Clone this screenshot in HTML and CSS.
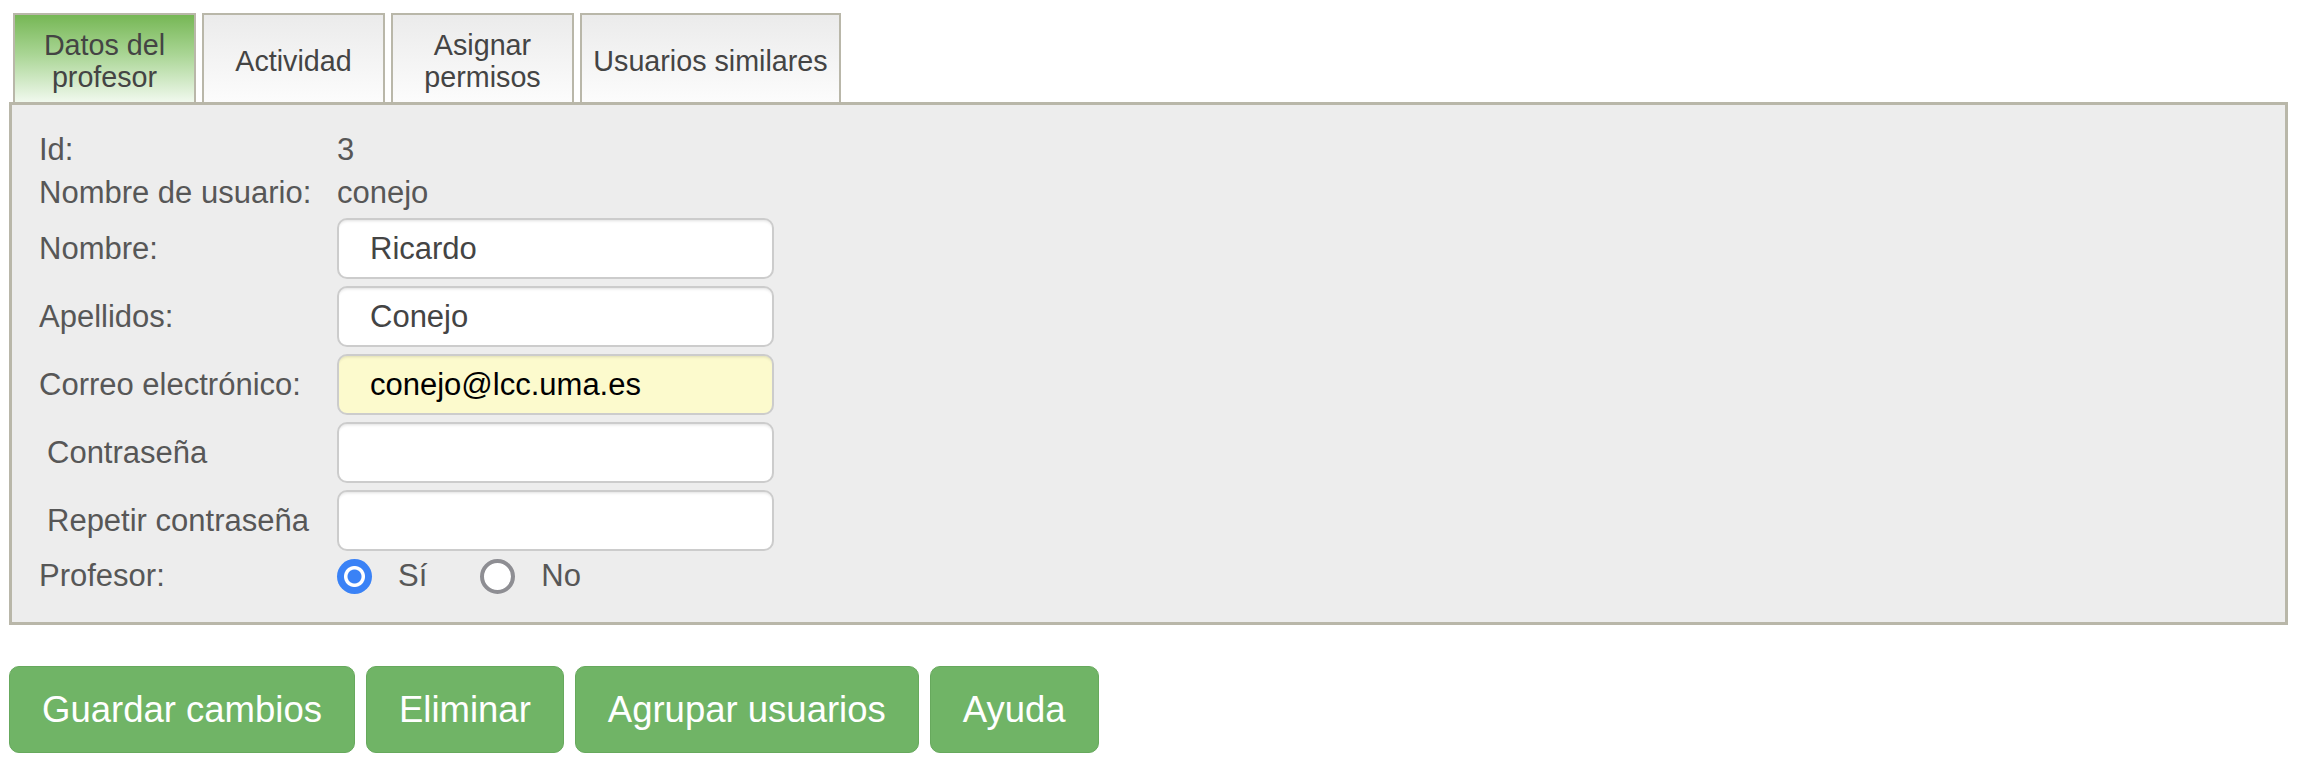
FILE: index.html
```html
<!DOCTYPE html>
<html lang="es">
<head>
<meta charset="utf-8">
<title>Datos del profesor</title>
<link rel="stylesheet" href="styles.css">
</head>
<body>
<div class="page">
  <ul class="tabs">
    <li class="tab tab-fixed active">Datos del profesor</li>
    <li class="tab tab-fixed">Actividad</li>
    <li class="tab tab-fixed">Asignar permisos</li>
    <li class="tab tab-auto">Usuarios similares</li>
  </ul>
  <div class="panel">
    <form class="form">
      <div class="label text-row">Id:</div>
      <div class="value text-row">3</div>
      <div class="label text-row">Nombre de usuario:</div>
      <div class="value text-row">conejo</div>
      <label class="label input-row" for="nombre">Nombre:</label>
      <input class="field" id="nombre" type="text" value="Ricardo">
      <label class="label input-row" for="apellidos">Apellidos:</label>
      <input class="field" id="apellidos" type="text" value="Conejo">
      <label class="label input-row" for="correo">Correo electrónico:</label>
      <input class="field field-autofill" id="correo" type="text" value="conejo@lcc.uma.es">
      <label class="label input-row indent" for="pass">Contraseña</label>
      <input class="field" id="pass" type="password">
      <label class="label input-row indent" for="pass2">Repetir contraseña</label>
      <input class="field" id="pass2" type="password">
      <div class="label text-row">Profesor:</div>
      <div class="radios text-row">
        <span class="radio checked"></span><span class="radio-label">Sí</span>
        <span class="radio"></span><span class="radio-label">No</span>
      </div>
    </form>
  </div>
  <div class="actions">
    <button class="btn" type="button">Guardar cambios</button>
    <button class="btn" type="button">Eliminar</button>
    <button class="btn" type="button">Agrupar usuarios</button>
    <button class="btn" type="button">Ayuda</button>
  </div>
</div>
</body>
</html>
```
FILE: styles.css
```css
* { box-sizing: border-box; }
html, body { margin: 0; padding: 0; background: #ffffff; }
body { font-family: "Liberation Sans", Arial, Helvetica, sans-serif; }

.page {
  padding: 13px 14px 0 9px;
}

.tabs {
  list-style: none;
  margin: 0 0 0 4px;
  padding: 0;
  display: flex;
  gap: 6px;
  height: 89px;
}

.tab {
  height: 89px;
  border: 2px solid #b9b7a9;
  border-bottom: none;
  background: linear-gradient(to bottom, #ebebeb 0%, #fcfcfc 100%);
  color: #444444;
  font-size: 28.7px;
  line-height: 32px;
  text-align: center;
  display: flex;
  align-items: center;
  justify-content: center;
  padding-top: 4px;
}

.tab-fixed { width: 183px; padding-left: 26px; padding-right: 26px; }
.tab-auto { width: 261px; padding-left: 10px; padding-right: 10px; white-space: nowrap; }

.tab.active {
  background: linear-gradient(to bottom, #76b755 0%, #a9d594 45%, #f1f9ee 100%);
}

.panel {
  border: 3px solid #b9b7a9;
  background: #ededed;
  padding: 27px 27px 28px 27px;
}

.form {
  display: grid;
  grid-template-columns: 298px 437px;
  grid-auto-rows: auto;
  row-gap: 7px;
  align-items: center;
  margin: 0;
}

.label, .value, .radio-label {
  font-size: 31px;
  color: #575757;
}

.text-row { height: 36px; line-height: 36px; }
.input-row { line-height: 36px; }
.indent { padding-left: 8px; }

.field {
  width: 437px;
  height: 61px;
  border: 2px solid #cccccc;
  border-radius: 10px;
  background: #ffffff;
  box-shadow: inset 0 3px 3px -2px rgba(0,0,0,0.12);
  font-family: "Liberation Sans", Arial, Helvetica, sans-serif;
  font-size: 31px;
  color: #444444;
  padding: 0 0 0 31px;
  margin: 0;
  outline: none;
}

.field-autofill {
  background: #fcfacd;
  color: #000000;
}

.radios {
  display: flex;
  align-items: center;
}

.radio {
  width: 35px;
  height: 35px;
  border-radius: 50%;
  border: 4px solid #8e8e93;
  background: #ffffff;
  flex: none;
}

.radio.checked {
  border: none;
  background: radial-gradient(circle, #3a82f6 0, #3a82f6 6.5px, #ffffff 7.5px, #ffffff 10px, #3a82f6 11px);
}

.radio-label { margin-left: 26px; margin-right: 53px; line-height: 36px; }

.actions {
  display: flex;
  gap: 11px;
  margin-top: 41px;
}

.btn {
  height: 87px;
  padding: 0 32px;
  border: 1px solid #67a95d;
  border-radius: 10px;
  background: #70b466;
  color: #ffffff;
  font-family: "Liberation Sans", Arial, Helvetica, sans-serif;
  font-size: 36.5px;
  line-height: 42px;
  cursor: pointer;
}
```
